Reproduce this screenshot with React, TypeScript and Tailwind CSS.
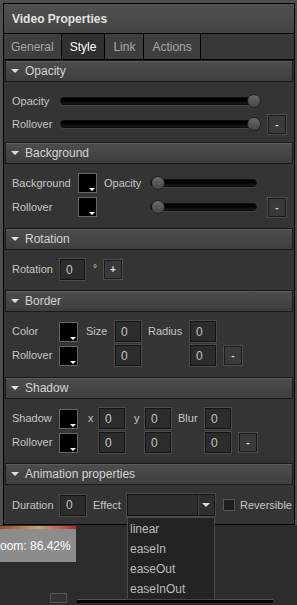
import React from "react";

function Header({ title }: { title: string }) {
  return (
    <div className="mx-[1px] h-[22px] flex items-center border border-[#1a1a1a] bg-linear-to-b from-[#4d4d4d] to-[#3e3e3e] shadow-[inset_0_1px_0_#5c5c5c] pl-[5px] text-[12px] text-[#d4d4d4]">
      <span className="mr-[6px] h-0 w-0 border-x-[4px] border-t-[4px] border-x-transparent border-t-[#e0e0e0]" />
      {title}
    </div>
  );
}

function Slider({ right }: { right?: boolean }) {
  return (
    <div className="relative h-[14px] w-full">
      <div className="absolute left-0 right-[4px] top-[3px] h-[8px] rounded-[4px] border border-[#0c0c0c] bg-linear-to-b from-[#000] to-[#1c1c1c] shadow-[0_1px_0_#454545]" />
      <div
        className={`absolute top-0 h-[14px] w-[14px] rounded-full border border-[#1e1e1e] bg-linear-to-b from-[#6a6a6a] to-[#454545] ${
          right ? "right-0" : "left-[1px]"
        }`}
      />
    </div>
  );
}

function Swatch() {
  return (
    <span className="relative h-[20px] w-[19px] shrink-0 border border-[#666] bg-black shadow-[inset_0_0_0_1px_#000]">
      <span className="absolute bottom-[1px] right-[1px] h-0 w-0 border-x-[3px] border-t-[3px] border-x-transparent border-t-white" />
    </span>
  );
}

function Num({ w = "w-[26px]" }: { w?: string }) {
  return (
    <span
      className={`${w} flex h-[21px] shrink-0 items-center border border-[#141414] bg-[#2c2c2c] pl-[5px] text-[12px] text-[#c4c4c4] shadow-[0_0_0_1px_#4a4a4a]`}
    >
      0
    </span>
  );
}

function Btn({ label }: { label: string }) {
  return (
    <span className="flex h-[19px] w-[18px] shrink-0 items-center justify-center border border-[#1c1c1c] bg-[#3a3a3a] text-[10px] font-bold text-[#ddd] shadow-[0_0_0_1px_#4c4c4c]">
      {label}
    </span>
  );
}

const label = "shrink-0 text-[11px] text-[#c6c6c6]";

export default function App() {
  return (
    <div className="relative h-[605px] w-[297px] overflow-hidden bg-[#2c2c2c] font-['Liberation_Sans',Arial,sans-serif]">
      <div className="bg-[#4e4e4e] pl-[3px] pr-[2px] pt-[3px]">
        <div className="border border-black bg-[#343434]">
          {/* title */}
          <div className="flex h-[30px] items-center border-b border-black bg-linear-to-b from-[#505050] to-[#444] pl-[8px] text-[12px] font-bold text-[#e2e2e2]">
            Video Properties
          </div>
          {/* tabs */}
          <div className="flex h-[26px] border-b border-black bg-[#383838] text-[12px]">
            <span className="flex items-center border-r border-black bg-[#3e3e3e] px-[7px] text-[#a8a8a8]">General</span>
            <span className="flex items-center border-r border-black bg-[#303030] px-[8px] text-white">Style</span>
            <span className="flex items-center border-r border-black bg-[#3e3e3e] px-[8px] text-[#a8a8a8]">Link</span>
            <span className="flex items-center border-r border-black bg-[#3e3e3e] px-[8px] text-[#a8a8a8]">Actions</span>
          </div>

          <div>
            <Header title="Opacity" />
            <div className="flex flex-col gap-[1px] pb-[7px] pl-[8px] pt-[8px]">
              <div className="flex h-[22px] items-center">
                <span className={`${label} w-[48px]`}>Opacity</span>
                <span className="w-[201px]">
                  <Slider right />
                </span>
              </div>
              <div className="flex h-[22px] items-center">
                <span className={`${label} w-[48px]`}>Rollover</span>
                <span className="w-[201px]">
                  <Slider right />
                </span>
                <span className="ml-[7px]">
                  <Btn label="-" />
                </span>
              </div>
            </div>

            <Header title="Background" />
            <div className="flex flex-col gap-[2px] pb-[10px] pl-[8px] pt-[8px]">
              <div className="flex h-[22px] items-center">
                <span className={`${label} w-[66px]`}>Background</span>
                <Swatch />
                <span className={`${label} ml-[7px] w-[46px]`}>Opacity</span>
                <span className="w-[111px]">
                  <Slider />
                </span>
              </div>
              <div className="flex h-[22px] items-center">
                <span className={`${label} w-[66px]`}>Rollover</span>
                <Swatch />
                <span className="w-[53px] shrink-0" />
                <span className="w-[111px]">
                  <Slider />
                </span>
                <span className="ml-[7px]">
                  <Btn label="-" />
                </span>
              </div>
            </div>

            <Header title="Rotation" />
            <div className="flex flex-col pb-[10px] pl-[8px] pt-[9px]">
              <div className="flex h-[21px] items-center">
                <span className={`${label} w-[48px]`}>Rotation</span>
                <Num w="w-[25px]" />
                <span className="ml-[8px] w-[11px] self-start pt-[2px] text-[10px] text-[#ccc]">°</span>
                <Btn label="+" />
              </div>
            </div>

            <Header title="Border" />
            <div className="flex flex-col gap-[3px] pb-[11px] pl-[8px] pt-[9px]">
              <div className="flex h-[21px] items-center">
                <span className={`${label} w-[47px]`}>Color</span>
                <Swatch />
                <span className={`${label} ml-[8px] w-[29px]`}>Size</span>
                <Num />
                <span className={`${label} ml-[7px] w-[42px]`}>Radius</span>
                <Num />
              </div>
              <div className="flex h-[21px] items-center">
                <span className={`${label} w-[47px]`}>Rollover</span>
                <Swatch />
                <span className="w-[37px] shrink-0" />
                <Num />
                <span className="w-[49px] shrink-0" />
                <Num />
                <span className="ml-[8px]">
                  <Btn label="-" />
                </span>
              </div>
            </div>

            <Header title="Shadow" />
            <div className="flex flex-col gap-[3px] pb-[10px] pl-[8px] pt-[9px]">
              <div className="flex h-[21px] items-center">
                <span className={`${label} w-[47px]`}>Shadow</span>
                <Swatch />
                <span className={`${label} ml-[10px] w-[11px]`}>x</span>
                <Num />
                <span className={`${label} ml-[9px] w-[11px]`}>y</span>
                <Num />
                <span className={`${label} ml-[7px] w-[27px]`}>Blur</span>
                <Num />
              </div>
              <div className="flex h-[21px] items-center">
                <span className={`${label} w-[47px]`}>Rollover</span>
                <Swatch />
                <span className="w-[21px] shrink-0" />
                <Num />
                <span className="w-[20px] shrink-0" />
                <Num />
                <span className="w-[34px] shrink-0" />
                <Num />
                <span className="ml-[8px]">
                  <Btn label="-" />
                </span>
              </div>
            </div>

            <Header title="Animation properties" />
            <div className="flex flex-col pb-[8px] pl-[8px] pt-[9px]">
              <div className="flex h-[22px] items-center">
                <span className={`${label} w-[48px]`}>Duration</span>
                <Num />
                <span className={`${label} ml-[7px] w-[34px]`}>Effect</span>
                <span className="flex h-[22px] w-[88px] shrink-0 border border-[#151515] bg-[#2e2e2e] shadow-[0_0_0_1px_#4a4a4a]">
                  <span className="flex-1" />
                  <span className="flex w-[17px] items-center justify-center border-l border-[#151515] shadow-[inset_1px_0_0_#4a4a4a]">
                    <span className="h-0 w-0 border-x-[4px] border-t-[4px] border-x-transparent border-t-[#ddd]" />
                  </span>
                </span>
                <span className="ml-[8px] h-[12px] w-[12px] shrink-0 border border-[#555] bg-[#1f1f1f]" />
                <span className={`${label} ml-[5px]`}>Reversible</span>
              </div>
            </div>
          </div>
        </div>
      </div>

      {/* canvas area below */}
      <div className="mt-[1px] h-[3px] w-[76px] bg-linear-to-r from-[#9a4a20] via-[#c8a070] to-[#b02828]" />
      <div className="flex h-[33px] w-[76px] items-center bg-[#8c8c8c] text-[12px] text-white">oom: 86.42%</div>
      <div className="mt-[31px] flex items-start">
        <span className="ml-[50px] h-[10px] w-[17px] border border-[#555] bg-[#333]" />
        <span className="ml-[10px] mt-[6px] h-[4px] w-[196px] border-t border-[#555] bg-black" />
      </div>

      {/* dropdown list */}
      <div className="absolute left-[127px] top-[517px] w-[88px] border border-[#484848] bg-[#232323] pt-[1px] text-[12px] text-[#bdbdbd]">
        {["linear", "easeIn", "easeOut", "easeInOut"].map((o) => (
          <div key={o} className="flex h-[20px] items-center pl-[2px]">
            {o}
          </div>
        ))}
      </div>
    </div>
  );
}
